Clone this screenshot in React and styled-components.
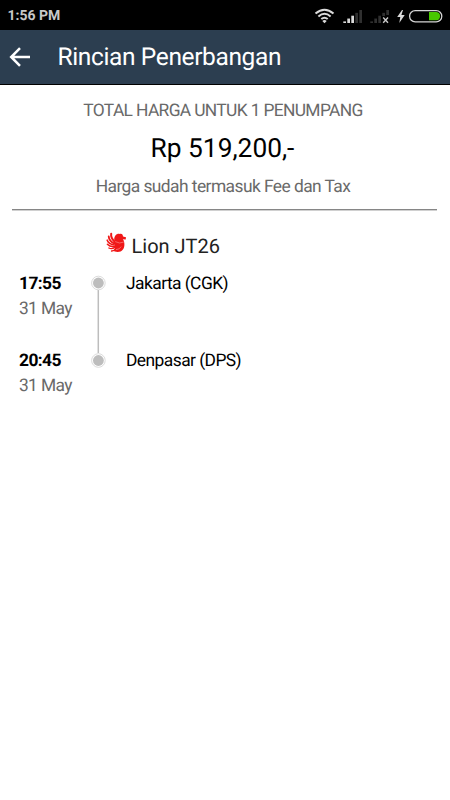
import React from "react";
import styled, { createGlobalStyle } from "styled-components";

const GlobalStyle = createGlobalStyle`
  * { box-sizing: border-box; }
  body {
    margin: 0;
    background: #fff;
    font-family: Roboto, "Liberation Sans", sans-serif;
    text-rendering: geometricPrecision;
  }
`;

const Screen = styled.div`
  width: 450px;
  height: 800px;
  overflow: hidden;
  background: #fff;
  color: #000;
`;

const Text = styled.span`
  display: block;
  white-space: nowrap;
  font-size: ${(p) => p.$size}px;
  line-height: ${(p) => p.$line}px;
  letter-spacing: ${(p) => p.$track || 0}px;
  font-weight: ${(p) => p.$weight || 400};
  color: ${(p) => p.$color || "#000"};
`;

const StatusBar = styled.header`
  height: 30px;
  padding: 2px 7px 0 7.5px;
  display: flex;
  align-items: center;
  justify-content: space-between;
  background: #000;
`;

const StatusIcons = styled.svg`
  display: block;
  width: 130px;
  height: 29px;
  margin-top: -2px;
`;

const AppBar = styled.nav`
  height: 55px;
  padding: 0 9px 0;
  display: flex;
  align-items: center;
  gap: 26.5px;
  background: #2c3e50;
  border-bottom: 1px solid #000;
`;

const BackIcon = styled.svg`
  width: 22px;
  height: 22px;
  flex: none;
`;

const Summary = styled.section`
  height: 124px;
  margin: 0 13px 0 12px;
  padding: 14px 3px 0 0;
  display: flex;
  flex-direction: column;
  align-items: center;
`;

const Rule = styled.hr`
  height: 2px;
  margin: 0 13px 0 12px;
  border: 0;
  border-top: 1px solid #868686;
  border-bottom: 1px solid #d0d0d0;
`;

const Price = styled.div`
  padding: 11px 0 11px;
  margin-right: 1px;
`;

const Flight = styled.div`
  display: flex;
  align-items: center;
  gap: 4.5px;
  margin: 20px 0 0 106px;
  height: 30px;
`;

const LionLogo = styled.svg`
  width: 21px;
  height: 22px;
  margin-top: -6px;
`;

const Route = styled.section`
  display: grid;
  grid-template-columns: 72px 15px 1fr;
  margin: 9px 0 0 19px;
`;

const Times = styled.div`
  display: flex;
  flex-direction: column;
  gap: 27px;
  padding-top: 2px;
`;

const Places = styled(Times)`
  padding-left: 20px;
  gap: 52px;
`;

const Track = styled.svg`
  width: 15px;
  height: 100px;
`;

const bars = [0, 1, 2, 3, 4];

function SystemIcons() {
  return (
    <StatusIcons viewBox="313 0 130 29">
      <g fill="none" stroke="#dadada" strokeWidth="2">
        <path d="M315.5 12.6Q324.5 5 333.5 12.6" />
        <path d="M318.4 15.4Q324.5 10.2 330.6 15.4" />
        <path d="M321.3 18.1Q324.5 15.4 327.7 18.1" />
      </g>
      <path d="M322.3 19.9Q324.5 18.2 326.7 19.9L324.5 22.2Z" fill="#dadada" />
      {bars.map((i) => (
        <rect key={i} x={343.3 + i * 4} y={20.4 - i * 2.85} width="2.7" height={1.6 + i * 2.85} fill={i < 3 ? "#dadada" : "#303030"} />
      ))}
      {bars.map((i) => (
        <rect key={i} x={370.3 + i * 4} y={20.4 - i * 2.85} width="2.7" height={i < 3 ? 1.6 + i * 2.85 : 5} fill="#303030" />
      ))}
      <path d="M382 15h8v8h-8z" fill="#000" />
      <path d="M383.2 16.5l4.8 5.2M388 16.5l-4.8 5.2" stroke="#c9c9c9" strokeWidth="1.4" />
      <path d="M402 9L397.2 16h3.1l-1 6 5.4-8h-3.3l1.6-5z" fill="#dadada" />
      <rect x="409.6" y="9.6" width="32.2" height="11.3" rx="5.6" fill="none" stroke="#d5d5d5" strokeWidth="1.3" />
      <path d="M429 11h7.5a4.2 4.2 0 0 1 0 8.3H429z" fill="#48c800" />
    </StatusIcons>
  );
}

export default function App() {
  return (
    <Screen>
      <GlobalStyle />
      <StatusBar>
        <Text $size={14} $line={20} $weight={700} $color="#c8c8c8">1:56 PM</Text>
        <SystemIcons />
      </StatusBar>
      <AppBar>
        <BackIcon viewBox="0 0 22 22">
          <path d="M21 11H3M11 2.2L2.2 11l8.8 8.8" fill="none" stroke="#fff" strokeWidth="2.5" />
        </BackIcon>
        <Text $size={24.5} $line={30} $track={-0.37} $color="#fff">Rincian Penerbangan</Text>
      </AppBar>
      <Summary>
        <Text $size={17.4} $line={24} $track={-0.65} $color="#696969">TOTAL HARGA UNTUK 1 PENUMPANG</Text>
        <Price><Text $size={26.3} $line={30}>Rp 519,200,-</Text></Price>
        <Text $size={17.4} $line={24} $track={-0.56} $color="#696969">Harga sudah termasuk Fee dan Tax</Text>
      </Summary>
      <Rule />
      <Flight>
        <LionLogo viewBox="0 0 21 22">
          <g fill="none" stroke="#f01818" strokeLinecap="round">
            <path d="M5.2 1.7Q4.5 6 8.8 10" strokeWidth="2" />
            <path d="M2.7 4.4Q3 9 8.4 11.6" strokeWidth="1.8" />
            <path d="M1.2 8.2Q2.7 12 8.2 13" strokeWidth="1.6" />
            <path d="M1.4 12.2Q4 15 8.4 14.4" strokeWidth="1.5" />
            <path d="M2.9 16Q5.5 17.5 9 15.4" strokeWidth="1.4" />
            <path d="M5.5 19Q8 19.2 10 16" strokeWidth="1.3" />
          </g>
          <path d="M8.2 7.3C8.4 3.5 11 1.2 13.8 2c2.2-.6 3 .6 3.2 2.4l3 .8-.3 2.4-2.9-.3c1.2 1.4 1.6 3.2 1.6 5.1 0 4.2-2.2 7.5-6.8 7.5-2 0-3.7-.7-4.6-1.7 2.2.2 2.4-1 2-3.2z" fill="#f01818" />
          <path d="M9.2 9.6Q13.6 12.2 17.8 10M10 17.6Q13.6 17.6 15.2 14.6" fill="none" stroke="#fff" strokeOpacity=".5" strokeWidth=".7" />
        </LionLogo>
        <Text $size={20} $line={28} $color="#222">Lion JT26</Text>
      </Flight>
      <Route>
        <Times>
          <div>
            <Text $size={17.4} $line={25} $track={-0.6} $weight={700}>17:55</Text>
            <Text $size={17.4} $line={25} $track={-0.65} $color="#696969">31 May</Text>
          </div>
          <div>
            <Text $size={17.4} $line={25} $track={-0.6} $weight={700}>20:45</Text>
            <Text $size={17.4} $line={25} $track={-0.65} $color="#696969">31 May</Text>
          </div>
        </Times>
        <Track viewBox="0 0 15 100">
          <path d="M7.3 20v63" stroke="#bdbdbd" strokeWidth="1.5" />
          {[13, 90.5].map((y) => (
            <g key={y}>
              <circle cx="7.4" cy={y} r="6.8" fill="#fff" stroke="#d2d2d2" strokeWidth=".8" />
              <circle cx="7.4" cy={y} r="5.4" fill="#bdbdbd" />
            </g>
          ))}
        </Track>
        <Places>
          <Text $size={17.4} $line={25} $track={-0.55}>Jakarta (CGK)</Text>
          <Text $size={17.4} $line={25} $track={-0.55}>Denpasar (DPS)</Text>
        </Places>
      </Route>
    </Screen>
  );
}
